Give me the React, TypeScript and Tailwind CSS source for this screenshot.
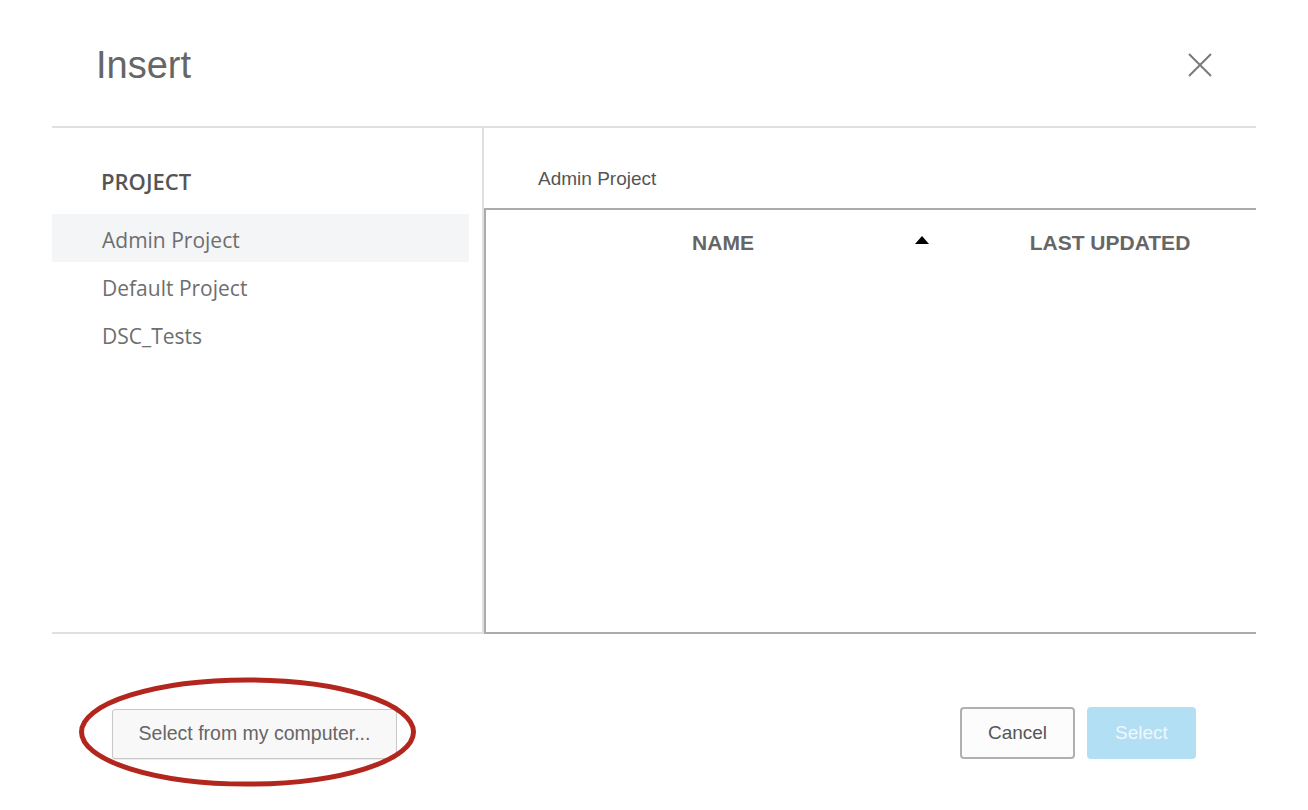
import { useState } from 'react';

const projects = ['Admin Project', 'Default Project', 'DSC_Tests'];

export default function App() {
  const [selected, setSelected] = useState('Admin Project');

  return (
    <div className="relative h-[810px] w-full overflow-hidden bg-white font-['Liberation_Sans',Arial,sans-serif]">
      <div className="mx-[52px]">
        {/* header */}
        <div className="flex h-[126px] items-center justify-between px-[44px] pt-[4px]">
          <h1 className="text-[38px] font-normal leading-none text-[#666666]">Insert</h1>
          <button className="flex h-[24px] w-[24px] items-center justify-center">
            <svg width="24" height="24" viewBox="0 0 24 24" fill="none" stroke="#7a7a7a" strokeWidth="2">
              <path d="M1 1 L23 23 M23 1 L1 23" />
            </svg>
          </button>
        </div>

        {/* body */}
        <div className="flex h-[508px] border-t-2 border-[#e0e0e0]">
          <div className="w-[432px] border-r-2 border-b-2 border-[#e0e0e0] font-['Open_Sans',sans-serif]">
            <div className="pl-[49px] pt-[40px] pb-[20px] text-[22px] font-semibold leading-[26px] text-[#555555]">
              PROJECT
            </div>
            <ul className="mr-[13px]">
              {projects.map((p) => (
                <li
                  key={p}
                  onClick={() => setSelected(p)}
                  className={`flex h-[48px] cursor-pointer items-center pl-[50px] pt-[5px] text-[21px] text-[#6e6e6e] ${selected === p ? 'bg-[#f4f5f7]' : ''}`}
                >
                  {p}
                </li>
              ))}
            </ul>
          </div>

          <div className="flex flex-1 flex-col">
            <div className="flex h-[80px] items-center pl-[54px] pt-[22px] text-[19px] text-[#555555]">
              {selected}
            </div>
            <div className="flex-1 border-t-2 border-l-2 border-b-2 border-[#ababab]">
              <div className="flex h-[66px] items-center text-[21px] font-bold text-[#666666]">
                <div className="relative flex w-[474px] justify-center">
                  NAME
                  <span className="absolute right-[31px] top-[9px] h-0 w-0 border-x-[7px] border-b-[8px] border-x-transparent border-b-black" />
                </div>
                <div className="flex flex-1 justify-center pl-[4px]">LAST UPDATED</div>
              </div>
            </div>
          </div>
        </div>

        {/* footer */}
        <div className="flex items-end justify-between px-[60px] pt-[73px]">
          <button className="h-[50px] w-[285px] rounded-[3px] border border-[#c8c8c8] bg-[#f8f8f8] text-[19.5px] text-[#666666] shadow-[0_1px_1px_rgba(0,0,0,0.08)]">
            Select from my computer...
          </button>
          <div className="flex gap-[12px]">
            <button className="h-[52px] w-[115px] rounded-[4px] border-2 border-[#b0b0b0] bg-[#fcfcfc] text-[19px] text-[#555555]">
              Cancel
            </button>
            <button className="h-[52px] w-[109px] rounded-[4px] bg-[#b3dff4] text-[19px] text-[#eef8fd]">
              Select
            </button>
          </div>
        </div>
      </div>

      {/* annotation */}
      <svg className="pointer-events-none absolute left-0 top-0" width="1308" height="810">
        <ellipse cx="247.5" cy="732" rx="166" ry="52" fill="none" stroke="#b3261e" strokeWidth="5" />
      </svg>
    </div>
  );
}
